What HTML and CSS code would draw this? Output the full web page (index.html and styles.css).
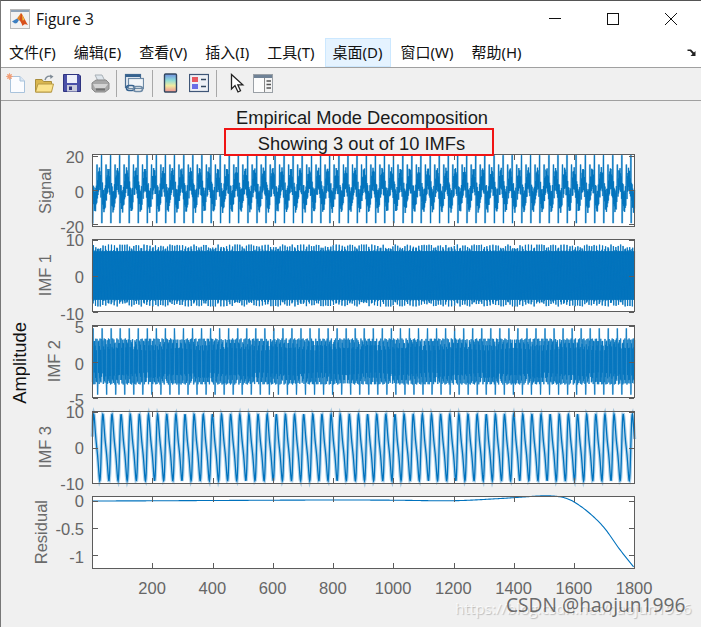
FILE: index.html
```html
<!DOCTYPE html>
<html lang="zh">
<head>
<meta charset="utf-8">
<title>Figure 3</title>
<link rel="stylesheet" href="styles.css">
</head>
<body>
<div class="window">
  <header class="titlebar">
    <svg class="app-icon" width="20" height="20" viewBox="0 0 20 20">
      <rect x="0.5" y="0.5" width="19" height="19" fill="#f2f2f2" stroke="#b9b9b9"/>
      <rect x="1" y="1" width="18" height="2" fill="#8fa3b8"/>
      <path d="M2 12.5 L7 9.5 L9 11 L7 14 L5 14.5 Z" fill="#3d7fc0"/>
      <path d="M7 9.5 L11 4 L13 9 L9.5 11.5 Z" fill="#e0832a"/>
      <path d="M11 4 C13 6 16 13 18 16 C15.5 15 14 15 12.5 17 C11.5 14 10.5 12.5 9.5 11.5 Z" fill="#d8501c"/>
      <path d="M12 5 L14.5 11 L12.5 11.5 Z" fill="#f0c040"/>
    </svg>
    <span class="window-title">Figure 3</span>
    <div class="controls">
      <svg width="14" height="14" viewBox="0 0 14 14"><path d="M1 6.5H13" stroke="#111" fill="none"/></svg>
      <svg width="14" height="14" viewBox="0 0 14 14"><rect x="1.5" y="1.5" width="11" height="11" stroke="#111" fill="none"/></svg>
      <svg width="14" height="14" viewBox="0 0 14 14"><path d="M1 1L13 13M13 1L1 13" stroke="#111" fill="none"/></svg>
    </div>
  </header>
  <nav class="menubar">
    <span class="menu-item">文件(F)</span>
    <span class="menu-item">编辑(E)</span>
    <span class="menu-item">查看(V)</span>
    <span class="menu-item">插入(I)</span>
    <span class="menu-item">工具(T)</span>
    <span class="menu-item is-active">桌面(D)</span>
    <span class="menu-item">窗口(W)</span>
    <span class="menu-item">帮助(H)</span>
    <svg class="dock" width="10" height="9" viewBox="0 0 10 9"><path d="M0.5 1.5L4 1.5L7 4.5L8.5 3V8H3.5L5.5 6L3 3H0.5Z" fill="#222"/></svg>
  </nav>
  <div class="toolbar">
    <span class="tool"><svg width="20" height="20" viewBox="0 0 20 20">
      <path d="M4.5 3.5H14L18.5 8V19.5H4.5Z" fill="#fbfcff" stroke="#a9c3dc"/>
      <path d="M14 3.5V8H18.5" fill="#dbe7f3" stroke="#a9c3dc"/>
      <circle cx="3.5" cy="3.5" r="2.2" fill="#f08a5a"/>
      <path d="M0 3.5H7M3.5 0V7M1 1L6 6M6 1L1 6" stroke="#f3a27c" stroke-width=".8"/>
    </svg></span>
    <span class="tool"><svg width="20" height="20" viewBox="0 0 20 20">
      <path d="M1.5 6.5H8L9.5 8.5H17.5V19H1.5Z" fill="#d9b64f" stroke="#a88d3c"/>
      <path d="M1.5 19L4 11H19.5L17.5 19Z" fill="#fbe38c" stroke="#b89a45"/>
      <path d="M11 7C12 3.5 15 2 18 4" fill="none" stroke="#7f8b96" stroke-width="1.4"/>
      <path d="M16 1.5L19.5 3.5L16.5 6Z" fill="#7f8b96"/>
    </svg></span>
    <span class="tool"><svg width="20" height="20" viewBox="0 0 20 20">
      <path d="M1.5 1.5H17L18.5 3V18.5H1.5Z" fill="#4a50a8" stroke="#2f3480"/>
      <rect x="5" y="2" width="10" height="8" fill="#eef0fa"/>
      <rect x="5" y="12" width="10" height="6.5" fill="#c9cbdc"/>
      <rect x="7" y="13.5" width="3" height="3.5" fill="#2f3480"/>
    </svg></span>
    <span class="tool"><svg width="20" height="20" viewBox="0 0 20 20">
      <path d="M5 2H12L15 8H8Z" fill="#dfe6ec" stroke="#a8b0b6"/>
      <path d="M2 10L6 7H16L19 10V16L15 19H5L2 16Z" fill="#a7a7a7" stroke="#8a8a8a"/>
      <path d="M3 11H18L15 15H5Z" fill="#d4d4d4"/>
      <rect x="6" y="15.5" width="9" height="2" fill="#6f6f6f"/>
    </svg></span>
    <span class="tool-sep sep-a"></span>
    <span class="tool"><svg width="20" height="20" viewBox="0 0 20 20">
      <rect x="1.5" y="1.5" width="15" height="13" fill="#e8eef5" stroke="#4a6d92" stroke-width="1.2"/>
      <rect x="1.5" y="1.5" width="15" height="2.5" fill="#35628f"/>
      <rect x="4.5" y="5.5" width="15" height="10" fill="#f2f5f9" stroke="#6e8aa6" stroke-width="1.2"/>
      <rect x="2.5" y="12.5" width="8" height="5" rx="2.5" fill="none" stroke="#35628f" stroke-width="1.6"/>
      <rect x="9.5" y="13.5" width="9" height="5" rx="2.5" fill="none" stroke="#6e8aa6" stroke-width="1.6"/>
    </svg></span>
    <span class="tool-sep sep-b"></span>
    <span class="tool"><svg width="20" height="20" viewBox="0 0 20 20">
      <defs><linearGradient id="cb" x1="0" y1="0" x2="0" y2="1">
        <stop offset="0" stop-color="#6f8fe0"/><stop offset=".35" stop-color="#8fdcd8"/>
        <stop offset=".65" stop-color="#f2ecA0"/><stop offset="1" stop-color="#ef8f92"/>
      </linearGradient></defs>
      <rect x="3.5" y="1" width="12" height="18" rx="1" fill="url(#cb)" stroke="#33475f" stroke-width="1.4"/>
    </svg></span>
    <span class="tool"><svg width="20" height="20" viewBox="0 0 20 20">
      <rect x="0.5" y="1.5" width="19" height="17" fill="#eef1f6" stroke="#3f5677" stroke-width="1.2"/>
      <rect x="3" y="4" width="6" height="5" fill="#e8585f"/>
      <rect x="3" y="11" width="6" height="5" fill="#6a6fe6"/>
      <path d="M12 6.5H17M12 13.5H17" stroke="#33475f" stroke-width="1.4"/>
    </svg></span>
    <span class="tool-sep sep-c"></span>
    <span class="tool tool-narrow"><svg width="20" height="20" viewBox="0 0 20 20">
      <path d="M2.5 1.5V16L6 12.5L9 19L11.5 17.8L8.8 11.8H13.8Z" fill="#fff" stroke="#222" stroke-width="1.3"/>
    </svg></span>
    <span class="tool"><svg width="20" height="20" viewBox="0 0 20 20">
      <rect x="0.5" y="1.5" width="19" height="18" fill="#f4f4f4" stroke="#9aa0a6"/>
      <rect x="1" y="2" width="18" height="3" fill="#6f8296"/>
      <rect x="1" y="5" width="10" height="14" fill="#fcfcfc"/>
      <path d="M11.5 5V19" stroke="#8a8a8a"/>
      <path d="M13.5 8H18M13.5 11.5H18M13.5 15H18" stroke="#555" stroke-width="1.5"/>
    </svg></span>
  </div>
  <main class="figure">
    <div class="heading">
      <div class="fig-title">Empirical Mode Decomposition</div>
      <div class="fig-sub">Showing 3 out of 10 IMFs</div>
    </div>
    <div class="chart">
      <div class="amp-col"><span class="amp-label">Amplitude</span></div>
      <div class="rows">
        <section class="axes-row">
          <div class="yside">
            <span class="ylabel">Signal</span>
            <div class="yticks t-signal"><span>20</span><span>0</span><span>-20</span></div>
          </div>
          <svg class="plot" data-series="signal" width="543" height="73"></svg>
        </section>
        <section class="axes-row">
          <div class="yside">
            <span class="ylabel">IMF 1</span>
            <div class="yticks t-imf1"><span>10</span><span>0</span><span>-10</span></div>
          </div>
          <svg class="plot" data-series="imf1" width="543" height="73"></svg>
        </section>
        <section class="axes-row">
          <div class="yside">
            <span class="ylabel">IMF 2</span>
            <div class="yticks t-imf2"><span>5</span><span>0</span><span>-5</span></div>
          </div>
          <svg class="plot" data-series="imf2" width="543" height="73"></svg>
        </section>
        <section class="axes-row">
          <div class="yside">
            <span class="ylabel">IMF 3</span>
            <div class="yticks t-imf3"><span>10</span><span>0</span><span>-10</span></div>
          </div>
          <svg class="plot" data-series="imf3" width="543" height="73"></svg>
        </section>
        <section class="axes-row">
          <div class="yside">
            <span class="ylabel">Residual</span>
            <div class="yticks t-res"><span>0</span><span>-0.5</span><span>-1</span></div>
          </div>
          <svg class="plot" data-series="residual" width="543" height="73"></svg>
        </section>
        <div class="xticks">
          <span>200</span><span>400</span><span>600</span><span>800</span><span>1000</span><span>1200</span><span>1400</span><span>1600</span><span>1800</span>
        </div>
      </div>
    </div>
    <div class="wm-faint">https://blog.csdn.net/haojun1996</div>
    <div class="wm-main">CSDN @haojun1996</div>
  </main>
</div>
<script src="plots.js"></script>
</body>
</html>
```

FILE: styles.css
```css
* { box-sizing: border-box; }
html, body { margin: 0; padding: 0; height: 100%; overflow: hidden; background: #f0f0f0; }
.window {
  width: 701px;
  height: 627px;
  display: flex;
  flex-direction: column;
  border-top: 1px solid #555;
  border-left: 1px solid #777;
  font-family: "Liberation Sans", Arial, sans-serif;
}
.titlebar {
  height: 37px;
  flex: none;
  background: #fff;
  display: flex;
  align-items: center;
  padding-left: 9px;
  position: relative;
}
.app-icon { margin-top: -1px; }
.window-title {
  margin-left: 6px;
  margin-top: -2px;
  font: 15.5px/20px "Open Sans", "Noto Sans", sans-serif;
  color: #111;
}
.controls {
  margin-left: auto;
  display: flex;
  gap: 44px;
  padding-right: 23px;
  margin-top: -1px;
}
.menubar {
  height: 30px;
  flex: none;
  background: #fff;
  border-bottom: 1px solid #a0a0a0;
  display: flex;
  gap: 2px;
  font: 15px/28px "Noto Sans", "Noto Sans CJK SC", sans-serif;
  color: #111;
  position: relative;
}
.menu-item { padding: 0 8px; height: 29px; white-space: nowrap; }
.menu-item.is-active { background: #e5f3ff; box-shadow: inset 0 0 0 1px #cce8ff; }
.dock { margin: 10px 4px 0 auto; }
.toolbar {
  height: 33px;
  flex: none;
  background: #f0f0f0;
  border-bottom: 1px solid #a0a0a0;
  display: flex;
  align-items: center;
  padding: 0 0 2px 1px;
}
.tool { width: 28px; height: 20px; display: flex; justify-content: center; }
.tool-narrow { width: 22px; justify-content: flex-start; padding-left: 2px; }
.tool svg { flex: none; }
.tool-sep { width: 1px; height: 27px; background: #a8a8a8; }
.sep-a { margin: 0 3px 0 2px; }
.sep-b { margin: 0 4px; }
.sep-c { margin: 0 10px 0 3px; }
.figure { flex: 1; position: relative; background: #f0f0f0; padding-top: 7px; }
.heading {
  margin-left: 91px;
  width: 543px;
  display: flex;
  flex-direction: column;
  align-items: center;
  position: relative;
  z-index: 1;
  margin-bottom: -2px;
  color: #1a1a1a;
  font-size: 18.3px;
}
.fig-title { height: 20px; line-height: 20px; margin-left: -3px; }
.fig-sub {
  width: 270px;
  height: 28px;
  border: 2px solid #f01414;
  text-align: center;
  line-height: 28px;
  margin-left: -9px;
  padding-left: 5px;
}
.chart { display: flex; }
.amp-col { width: 27px; flex: none; display: flex; align-items: center; justify-content: center; padding-left: 10px; height: 418px; }
.amp-label { writing-mode: vertical-rl; transform: rotate(180deg); font-size: 18.4px; line-height: 18px; color: #111; }
.rows { display: grid; grid-template-rows: 85px 86px 86px 85px 73px auto; }
.axes-row { display: flex; align-items: flex-start; height: 73px; }
.yside { width: 64px; height: 73px; display: flex; justify-content: flex-end; align-items: center; flex: none; }
.ylabel {
  writing-mode: vertical-rl;
  transform: rotate(180deg);
  font-size: 16.5px;
  line-height: 18px;
  color: #6a6a6a;
  margin-right: 6px;
}
.yticks {
  align-self: flex-start;
  display: flex;
  flex-direction: column;
  justify-content: space-between;
  align-items: flex-end;
  font-size: 16.5px;
  line-height: 16px;
  color: #666;
  margin-right: 8px;
}
.t-signal { margin-top: -5px; height: 86px; }
.t-imf1 { margin-top: -7px; height: 90px; }
.t-imf2 { margin-top: -6px; height: 89px; }
.t-imf3 { margin-top: -7px; height: 88px; }
.t-res { margin-top: -3px; height: 72px; }
.plot { display: block; flex: none; overflow: visible; }
.xticks {
  display: flex;
  margin-left: 94px;
  margin-top: 11px;
  font-size: 16.5px;
  line-height: 16px;
  color: #666;
}
.xticks span { width: 60.25px; text-align: center; flex: none; }
.wm-main {
  position: absolute;
  left: 505px;
  top: 490px;
  width: 190px;
  font: 19.2px/28px "Open Sans", "Noto Sans", sans-serif;
  color: rgba(70, 70, 70, .8);
  white-space: nowrap;
}
.wm-faint {
  position: absolute;
  left: 454px;
  top: 494px;
  font: 15.2px/26px "Open Sans", "Noto Sans", sans-serif;
  color: rgba(255, 255, 255, .75);
  text-shadow: 1px 1px 1px rgba(0, 0, 0, .22);
  white-space: nowrap;
}
```

FILE: plots.js
```js
(function () {
  var NS = 'http://www.w3.org/2000/svg';
  var TAU = Math.PI * 2;
  var BLUE = '#0072BD';
  var FRAME = '#5c5c5c';

  function alt(t) { return t % 2 === 0 ? 1 : -1; }
  function imf1(t) {
    var env = 6.7 + 1.9 * Math.pow(Math.abs(Math.sin(t * 0.37 + Math.sin(t * 0.05))), 12);
    return alt(t) * env;
  }
  function imf2(t) {
    var p = t % 30;
    var spike = p === 3 ? 4.6 : (p === 18 ? -4.6 : 0);
    if (spike) return spike;
    var j = Math.abs(Math.sin(t * 0.9));
    return alt(t) * (1.5 + 1.7 * j);
  }
  function imf3(t) {
    var th = TAU * t / 30.3;
    return 9.3 * Math.sin(th + 0.6 * Math.sin(th));
  }
  function signal(t) {
    var p = ((t % 30.3) + 30.3) % 30.3;
    if (p < 1) return 20.5;
    if (p < 2) return -19.5;
    if (p >= 15 && p < 16) return 15;
    var f = p / 30.3;
    var base = -7 * Math.exp(-Math.pow((f - 0.3) / 0.16, 2)) + 7 * Math.exp(-Math.pow((f - 0.78) / 0.16, 2));
    return base + alt(t) * (4 + 2.5 * Math.abs(Math.sin(t * 0.7)));
  }
  var config = {
    signal: { fn: signal, scale: 1.7, mid: 36, ticks: [20, 0, -20], width: 0.8, halo: 2.2 },
    imf1: { fn: imf1, scale: 3.6, mid: 36.5, ticks: [10, 0, -10], width: 0.8, halo: 1.6 },
    imf2: { fn: imf2, scale: 7.2, mid: 36.5, ticks: [5, 0, -5], width: 0.7, halo: 1.8 },
    imf3: { fn: imf3, scale: 3.58, mid: 36.5, ticks: [10, 0, -10], width: 1.3, halo: 3.6 }
  };
  var residual = [[1,5],[200,4.8],[400,4.5],[800,4],[1000,4.2],[1200,4.7],[1350,2.6],[1450,0.6],[1500,-0.2],[1540,0.3],[1570,2],[1600,6],[1650,17],[1700,32],[1750,53],[1800,72]];

  function px(t) { return 0.5 + (t - 1) * 542 / 1799; }
  function el(name, attrs) {
    var n = document.createElementNS(NS, name);
    for (var k in attrs) n.setAttribute(k, attrs[k]);
    return n;
  }
  function interp(t) {
    for (var i = 1; i < residual.length; i++) {
      if (t <= residual[i][0]) {
        var a = residual[i - 1], b = residual[i];
        var p0 = residual[Math.max(i - 2, 0)], p3 = residual[Math.min(i + 1, residual.length - 1)];
        var u = (t - a[0]) / (b[0] - a[0]);
        var m1 = (b[1] - p0[1]) / (b[0] - p0[0]) * (b[0] - a[0]);
        var m2 = (p3[1] - a[1]) / (p3[0] - a[0]) * (b[0] - a[0]);
        var u2 = u * u, u3 = u2 * u;
        return (2*u3 - 3*u2 + 1) * a[1] + (u3 - 2*u2 + u) * m1 + (-2*u3 + 3*u2) * b[1] + (u3 - u2) * m2;
      }
    }
    return residual[residual.length - 1][1];
  }

  document.querySelectorAll('.plot').forEach(function (svg) {
    var name = svg.getAttribute('data-series');
    var pts = [], tickYs = [], t, width = 1.1, halo = 0;
    if (name === 'residual') {
      for (t = 1; t <= 1800; t += 4) pts.push(px(t).toFixed(2) + ',' + interp(t).toFixed(2));
      tickYs = [4.5, 31.5, 59];
    } else {
      var c = config[name];
      width = c.width;
      halo = c.halo;
      for (t = 1; t <= 1800; t++) pts.push(px(t).toFixed(2) + ',' + (c.mid - c.fn(t) * c.scale).toFixed(2));
      tickYs = c.ticks.map(function (v) { return c.mid - v * c.scale; });
    }
    svg.appendChild(el('rect', { x: 0.5, y: 0.5, width: 542, height: 72, fill: '#fff' }));
    var ticks = '';
    for (var v = 200; v <= 1600; v += 200) {
      var x = Math.round(px(v)) + 0.5;
      ticks += 'M' + x + ' 1V6M' + x + ' 72V67';
    }
    tickYs.forEach(function (y) {
      var yy = Math.round(y) + 0.5;
      ticks += 'M1 ' + yy + 'H6M542 ' + yy + 'H537';
    });
    var line = pts.join(' ');
    if (halo) {
      svg.appendChild(el('polyline', { points: line, fill: 'none', stroke: BLUE, 'stroke-opacity': 0.3, 'stroke-width': halo }));
    }
    svg.appendChild(el('polyline', { points: line, fill: 'none', stroke: BLUE, 'stroke-width': width }));
    svg.appendChild(el('path', { d: ticks, fill: 'none', stroke: FRAME }));
    svg.appendChild(el('rect', { x: 0.5, y: 0.5, width: 542, height: 72, fill: 'none', stroke: FRAME }));
  });
})();
```
